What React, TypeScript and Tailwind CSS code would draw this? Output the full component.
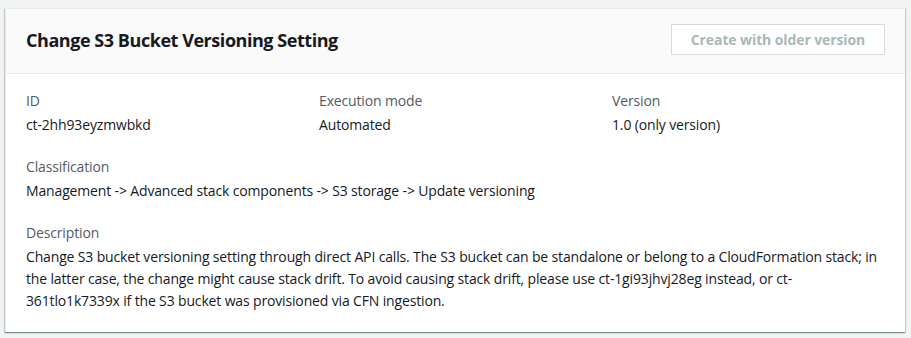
const details = [
  { label: "ID", value: "ct-2hh93eyzmwbkd" },
  { label: "Execution mode", value: "Automated" },
  { label: "Version", value: "1.0 (only version)" },
];

function Field({ label, children }: { label: string; children: React.ReactNode }) {
  return (
    <div className="flex flex-col gap-[2px] tracking-[-0.15px]">
      <div className="text-[14px] leading-[22px] text-[#545b64]">{label}</div>
      <div className="text-[14px] leading-[22px] text-[#16191f]">{children}</div>
    </div>
  );
}

export default function App() {
  return (
    <div
      className="min-h-[338px] bg-[#f2f3f3] pt-[8px] pl-[5px] pr-[6px]"
      style={{ fontFamily: '"Open Sans", Arial, sans-serif' }}
    >
      <div className="bg-white border-t border-l border-[#eaeded] shadow-[0_1px_1px_0_rgba(0,28,36,0.3),1px_1px_1px_0_rgba(0,28,36,0.15),-1px_1px_1px_0_rgba(0,28,36,0.15)]">
        <div className="flex items-center justify-between bg-[#fafafa] border-b border-[#eaeded] px-[20px] h-[65px]">
          <h2 className="text-[18px] leading-[24px] font-bold tracking-[-0.45px] text-[#16191f] -mt-[2px]">
            Change S3 Bucket Versioning Setting
          </h2>
          <button className="h-[31px] w-[214px] -mt-[3px] border border-[#d5dbdb] bg-white text-[14px] font-bold tracking-[-0.1px] text-[#aab7b8]">
            Create with older version
          </button>
        </div>
        <div className="px-[20px] pt-[16px] pb-[20px] flex flex-col gap-[20px]">
          <div className="grid grid-cols-3 gap-[20px]">
            {details.map((d) => (
              <Field key={d.label} label={d.label}>
                {d.value}
              </Field>
            ))}
          </div>
          <Field label="Classification">
            Management -&gt; Advanced stack components -&gt; S3 storage -&gt; Update versioning
          </Field>
          <Field label="Description">
            Change S3 bucket versioning setting through direct API calls. The S3 bucket can be
            standalone or belong to a CloudFormation stack; in the latter case, the change might
            cause stack drift. To avoid causing stack drift, please use ct-1gi93jhvj28eg instead, or
            ct-361tlo1k7339x if the S3 bucket was provisioned via CFN ingestion.
          </Field>
        </div>
      </div>
    </div>
  );
}
